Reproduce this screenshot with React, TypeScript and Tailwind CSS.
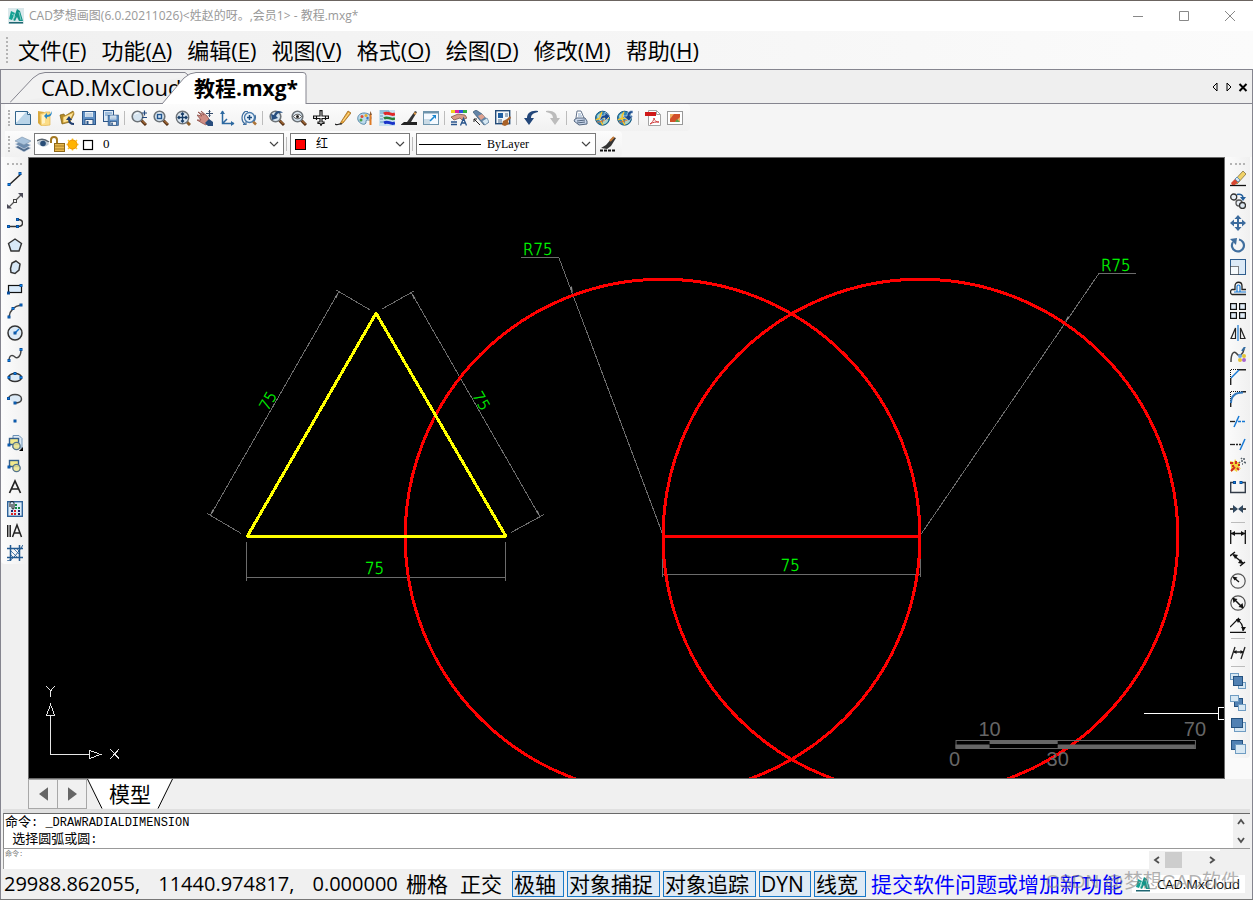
import type { JSX, ReactNode } from "react";

const UI_FONT = "font-['Open_Sans','Noto_Sans_CJK_SC',sans-serif]";

type Tool = { name: string; icon: ReactNode } | "sep";

function Dot({ x, y }: { x: number; y: number }): JSX.Element {
	return (
		<rect
			x={x - 1}
			y={y - 1}
			width="2"
			height="2"
			fill="#0a84e8"
			stroke="#0a4f9c"
			strokeWidth="1"
		/>
	);
}

function Lens({ children }: { children?: ReactNode }): JSX.Element {
	return (
		<>
			<path d="M10.5 10.5 15 15" stroke="#5a3418" strokeWidth="3" />
			<path d="M11 10.5 14.5 14" stroke="#d08a48" strokeWidth="1" />
			<circle cx="6.5" cy="6.5" r="5.3" fill="#d5e4f0" stroke="#6d7378" strokeWidth="1.6" />
			<path d="M3.5 5a4 4 0 0 1 4-2" stroke="#fff" />
			{children}
		</>
	);
}

function Globe({ arrow }: { arrow: string }): JSX.Element {
	return (
		<>
			<circle cx="7.5" cy="8.2" r="7" fill="#2f86b8" stroke="#185a80" />
			<path d="M2 6c2-4 5-3 5-1s-3 2-2 4-3 1-3-3zM8 10c3-2 6-1 5 1s-4 4-5 3z" fill="#a9d4c8" />
			<path d="M1 10c4-4 8 0 13-2M7 2c-3 4-2 9 1 13" stroke="#f6c52c" strokeWidth="1.5" />
			<path d="M2 12c3 0 8-1 11-4" stroke="#e87830" />
			<path d={arrow} fill="#19498c" stroke="#dbe9f5" strokeWidth=".6" />
		</>
	);
}

const floppy = (
	<>
		<rect x="1.5" y="1.5" width="13" height="13" fill="#5e8fc4" stroke="#2c5688" />
		<rect x="4" y="2" width="8" height="5" fill="#e9f2fa" />
		<path d="M4.5 4h7M4.5 6h7" stroke="#9ab6d2" />
		<rect x="4" y="9.5" width="8" height="5" fill="#f4f4f4" stroke="#2c5688" />
		<rect x="5.5" y="11" width="2" height="3" fill="#2c5688" />
	</>
);

const fileTools: Tool[] = [
	{
		name: "新建",
		icon: (
			<>
				<path d="M.5 1.5h12l3 3v10H.5z" fill="#b9d4e8" stroke="#33658c" />
				<path d="M1 2h10L2 12H1z" fill="#f4f9fd" />
				<path d="M12.5 1.5v3h3" fill="#fff" stroke="#33658c" />
			</>
		),
	},
	{
		name: "打开",
		icon: (
			<>
				<path d="M1 1l6 1v13H3L1 13z" fill="#d9a93c" />
				<path d="M3 4l6-2h4v13l-9 1z" fill="#fbdc86" stroke="#e3b552" strokeWidth=".7" />
				<path d="M5 5l3-1v9l-3 1z" fill="#fff2c4" />
				<path d="M15 1c-1 3-3 4-5 4V3L7 6l3 3V7c4 0 5-3 5-6z" fill="#2486c8" />
			</>
		),
	},
	{
		name: "打开云图",
		icon: (
			<>
				<path d="M1 5l4-1 1 2 8-5 1 3-4 8-8 2z" fill="#b38a24" stroke="#7d5d12" strokeWidth=".7" />
				<path d="M4 7l11-5-4 9-7 2z" fill="#ffe59a" stroke="#c0922c" strokeWidth=".7" />
				<path d="M15 14c-4 0-5-2-5-5" stroke="#223f70" strokeWidth="2" />
				<path d="M7 10l3-4 3 4z" fill="#223f70" />
			</>
		),
	},
	{ name: "保存", icon: floppy },
	{
		name: "另存为",
		icon: (
			<>
				<rect x=".5" y=".5" width="10" height="11" fill="#dce9f5" stroke="#2c5688" />
				<path d="M2 3h7M2 5h3" stroke="#5e8fc4" />
				<g transform="translate(4 4) scale(.78)">{floppy}</g>
			</>
		),
	},
	"sep",
	{
		name: "实时缩放",
		icon: (
			<>
				<Lens />
				<path d="M11 3h5M13.5.5v5M11 7.5h5" stroke="#244a80" strokeWidth="1.2" />
			</>
		),
	},
	{
		name: "窗口缩放",
		icon: (
			<Lens>
				<rect x="4.5" y="4.5" width="4" height="4" stroke="#1f5590" strokeWidth="1.4" />
			</Lens>
		),
	},
	{
		name: "范围缩放",
		icon: (
			<>
				<path d="M11 11l4 4" stroke="#8a5b28" strokeWidth="3" />
				<circle cx="7.5" cy="7.5" r="6.2" fill="#dce8f2" stroke="#6d7378" strokeWidth="1.4" />
				<path
					d="M7.5 3v9M3 7.5h9M6 4.5 7.5 3 9 4.5M6 10.5 7.5 12 9 10.5M4.5 6 3 7.500 4.500 9M10.5 6 12 7.500 10.500 9"
					stroke="#163c66"
					strokeWidth="1.3"
				/>
			</>
		),
	},
	{
		name: "平移",
		icon: (
			<>
				<path d="M0 5l5 1-4-4 6 3-3-4 6 5 3 5-4 4-4-2-5-3 4 0z" fill="#cf8d84" stroke="#8e4f49" strokeWidth=".8" />
				<path d="M8 13l4-4 4 3v4h-5z" fill="#294d7d" />
				<path d="M12.5 0v7M9 3.500h7M11.500 1.500l1-1 1 1M11.500 5.500l1 1 1-1" stroke="#364d6c" />
			</>
		),
	},
	{
		name: "坐标系",
		icon: (
			<>
				<path d="M3.5 1v12.5H15M3.500 13.500 8 9" stroke="#2c68a0" strokeWidth="1.5" />
				<path d="M1 4l2.500-3.500L6 4zM12 11l3.500 2.500L12 16z" fill="#2c68a0" />
			</>
		),
	},
	{
		name: "动态缩放",
		icon: (
			<>
				<path d="M12 11.500l3 3" stroke="#ad7438" strokeWidth="2.5" />
				<circle cx="8.500" cy="7.500" r="5" fill="#e8f2fb" stroke="#4a7bac" strokeWidth="1.3" />
				<path d="M8.500 5v5M6 7.500h5" stroke="#1b4c80" strokeWidth="1.5" />
				<path d="M4 1.500C0 5 0 11 4 14M2 14.500h3v-3M4 1.500h3M14 5c1 3 0 5-1 6" stroke="#3f6fa0" strokeWidth="1.2" />
			</>
		),
	},
	"sep",
	{
		name: "上次缩放",
		icon: (
			<Lens>
				<path d="M14 3C12 0 6 0 5 5L2 4l1 6 6-2-2-2c1-3 4-4 7-3z" fill="#274f80" />
			</Lens>
		),
	},
	{
		name: "查看",
		icon: (
			<Lens>
				<path d="M2.500 6.500c2-3 6-3 8 0-2 3-6 3-8 0z" fill="#fff" stroke="#444" />
				<circle cx="6.500" cy="6.500" r="1.500" fill="#222" />
			</Lens>
		),
	},
	{
		name: "移动视图",
		icon: (
			<path
				d="M7 .6h2V6h6.400v2.500H9V12h2v1.500H9L8 15.400l-1-1.900H5V12h2V8.500H.600V6H7zM3.500 6v4M12.500 6v4"
				fill="#fff"
				stroke="#111"
				strokeWidth="1.2"
			/>
		),
	},
	{
		name: "画笔",
		icon: (
			<>
				<path d="M6 12l7-11 3 2-8 10-3 1z" fill="#eca93b" stroke="#9d6820" strokeWidth=".8" />
				<path d="M8 11l6-8" stroke="#ffe39a" />
				<path d="M0 14c3 2 4-1 7 0" stroke="#222" strokeWidth="1.3" />
			</>
		),
	},
	{
		name: "调色板",
		icon: (
			<>
				<path d="M7 3C2 3 0 7 1 10s5 5 7 4 0-4 2-4 4 1 4-2-3-5-7-5z" fill="#bddaec" stroke="#5689aa" />
				<circle cx="5" cy="6.500" r="1.500" fill="#e04b38" />
				<circle cx="9" cy="5.500" r="1.500" fill="#e8ad28" />
				<circle cx="4" cy="10" r="1.500" fill="#48a048" />
				<circle cx="10.500" cy="8" r="1.200" fill="#3b6fbe" />
				<path d="M13.500 15V5" stroke="#df7a24" strokeWidth="2" />
				<path d="M12.500 5l1-4 1.500 4z" fill="#8b5930" />
			</>
		),
	},
	{
		name: "图层颜色",
		icon: (
			<>
				<rect x="0" y="0" width="16" height="16" fill="#c9e2f0" />
				<path d="M1 1h9v2H1M1 6h3M1 9h3M1 12h3" stroke="#5e9ac0" />
				<path d="M5 4c4-3 6 2 11 0" stroke="#e02828" strokeWidth="3" />
				<path d="M5 8.500c4-3 6 2 11 0" stroke="#277c34" strokeWidth="2.5" />
				<path d="M5 13c4-3 6 2 11 0" stroke="#1833c8" strokeWidth="3" />
			</>
		),
	},
	{
		name: "线宽",
		icon: (
			<>
				<path d="M0 14.500 3 12h13v3H0z" fill="#222" />
				<path d="M6 12 14 1l2 1-6 10z" fill="#333" />
				<path d="M13 3l2 1" stroke="#d99648" strokeWidth="2" />
			</>
		),
	},
	{
		name: "全屏",
		icon: (
			<>
				<rect x=".5" y="1.5" width="15" height="13" fill="#f5faff" stroke="#6e94ac" />
				<path d="M.5 2.500h15" stroke="#6e94ac" strokeWidth="2" />
				<rect x="1" y="9" width="6" height="5" fill="#cadbe6" />
				<path d="M7 11l4-4" stroke="#1b87cf" strokeWidth="1.6" />
				<path d="M9 5h4v4z" fill="#1b87cf" />
			</>
		),
	},
	"sep",
	{
		name: "特性",
		icon: (
			<>
				<path d="M0 1.500h4" stroke="#f0d020" strokeWidth="3" />
				<path d="M4 1.500h4" stroke="#e020a0" strokeWidth="3" />
				<path d="M8 1.500h4" stroke="#3050e0" strokeWidth="3" />
				<path d="M12 1.500h4" stroke="#30b040" strokeWidth="3" />
				<path d="M0 7l7-3 7 1 2 3-5 2-2-2-6 2z" fill="#d79b86" stroke="#74483c" strokeWidth=".7" />
				<path d="M0 12h6M0 14.500h6M9.500 15.500l3-7 3 7M10.500 13h4" stroke="#28548c" strokeWidth="1.3" />
			</>
		),
	},
	{
		name: "特性匹配",
		icon: (
			<>
				<path d="M0 2l3-2 6 4 7 8-5 3-6-7z" fill="#6284a7" stroke="#34536f" strokeWidth=".7" />
				<path d="M5 6l4-2 3 3-4 3z" fill="#dea18f" />
				<path d="M9 11l5-3 2 4-4 3z" fill="#d7e9f4" stroke="#6184a4" strokeWidth=".7" />
				<path d="M1 9l6 6M1 12V9h3" stroke="#222" />
			</>
		),
	},
	{
		name: "图块",
		icon: (
			<>
				<rect x=".7" y=".7" width="14" height="13" fill="#f3f7fa" stroke="#234b78" strokeWidth="1.4" />
				<rect x="3" y="3" width="5" height="5" fill="#1f5fa2" />
				<path d="M10 4h3M10 6h3M3 10h4M3 12h4" stroke="#4b6b8b" />
				<path d="M7 15l1-4 4-2 3-3 1 2-3 3 1 3-4 2z" fill="#a96228" />
			</>
		),
	},
	"sep",
	{
		name: "撤销",
		icon: <path d="M15 1C8 0 4 3 4 8H1l5 7 5-7H8c0-3 2-5 7-6z" fill="#23477a" />,
	},
	{
		name: "重做",
		icon: <path d="M1 1c7-1 11 2 11 7h3l-5 7-5-7h3c0-3-2-5-7-6z" fill="#bcbcbc" />,
	},
	"sep",
	{
		name: "打印",
		icon: (
			<>
				<path d="M3 8l1-7h4l3 7" fill="#fff" stroke="#65758d" />
				<path d="M5 4h3M5 6h4" stroke="#8ba6c7" />
				<path d="M2 9l2-1h8l2 3v3l-8 1-5-4z" fill="#c8d5e9" stroke="#52657f" />
				<path d="M4 11l8-1M4 13l8-1" stroke="#52657f" />
			</>
		),
	},
	{ name: "网络打开", icon: <Globe arrow="M5 11c0-4 2-6 5-6V2l5 4-5 5V8C8 8 7 9 5 11z" /> },
	{ name: "网络保存", icon: <Globe arrow="M16 1c-4-1-6 2-6 5H6l6 5 4-5h-3c0-2 1-3 3-3z" /> },
	"sep",
	{
		name: "输出PDF",
		icon: (
			<>
				<path d="M3.5.5h8l4 4v11h-12z" fill="#fff" stroke="#a4a4a4" />
				<path d="M11.5.5v4h4" stroke="#a4a4a4" />
				<rect x="0" y="2" width="11" height="4" fill="#d01818" />
				<path d="M5 14c2-1 4-4 4-6 0 3 3 4 5 4-3 0-6 0-9 2z" stroke="#d04040" />
			</>
		),
	},
	{
		name: "输出图片",
		icon: (
			<>
				<rect x=".5" y="1.5" width="15" height="13" fill="#fff" stroke="#999" />
				<rect x="3" y="4" width="10" height="8" fill="#f0b060" />
				<path d="M3 9l4-5h6v3L8 12H3z" fill="#d24f28" />
				<path d="M8 12l2-3 3 3z" fill="#5aa04c" />
			</>
		),
	},
];

const insertShapes = (
	<>
		<rect x="2.5" y="3.500" width="9" height="6" fill="#f4ea8c" stroke="#35608c" strokeWidth="1.4" />
		<circle cx="9.500" cy="11" r="3.700" fill="#f0e68c" fillOpacity=".85" stroke="#54738c" strokeWidth="1.3" />
		<Dot x={2} y={10} />
	</>
);

const drawTools: Tool[] = [
	{
		name: "直线",
		icon: (
			<>
				<path d="M2 14 14 3" stroke="#222" strokeWidth="1.5" />
				<Dot x={2} y={13.5} />
				<Dot x={13} y={2.5} />
			</>
		),
	},
	{
		name: "构造线",
		icon: (
			<>
				<path d="M2 14 14 2" stroke="#555" strokeWidth="1.2" />
				<path d="M0 11v4.500h5zM16 0v5l-5-5z" fill="#4b4b58" />
				<rect x="6.5" y="6.5" width="3" height="3" fill="#eee" stroke="#444" />
			</>
		),
	},
	{
		name: "多段线",
		icon: (
			<>
				<path d="M2 11.500h9c6 0 6-7 0-7" stroke="#333" strokeWidth="1.4" />
				<Dot x={1.5} y={11.5} />
				<Dot x={10.5} y={11.5} />
				<Dot x={10.5} y={4.5} />
			</>
		),
	},
	{
		name: "正多边形",
		icon: <path d="M8 2l6.500 4.500-2.500 7.500H4L1.500 6.500z" fill="#d7e8f7" stroke="#333" strokeWidth="1.4" />,
	},
	{
		name: "多边形",
		icon: <path d="M9 2l4 3-1 6-4 3.500-4-1-.5-4L5 4z" fill="#d7e8f7" stroke="#333" strokeWidth="1.5" />,
	},
	{
		name: "矩形",
		icon: (
			<>
				<rect x="1.5" y="4.500" width="13" height="7" fill="#d9eafa" stroke="#111" strokeWidth="1.2" />
				<Dot x={1.5} y={12} />
				<Dot x={14} y={4.5} />
			</>
		),
	},
	{
		name: "圆弧",
		icon: (
			<>
				<path d="M2 14C3 7 7 3 14 2" stroke="#444" strokeWidth="1.5" />
				<Dot x={2} y={14} />
				<Dot x={6} y={5.5} />
				<Dot x={14} y={2} />
			</>
		),
	},
	{
		name: "圆",
		icon: (
			<>
				<circle cx="8" cy="8" r="7" fill="#dceaf6" stroke="#333" strokeWidth="1.5" />
				<path d="M8 8l4-4" stroke="#1475ce" strokeWidth="1.5" />
				<Dot x={8} y={8} />
			</>
		),
	},
	{
		name: "样条曲线",
		icon: (
			<>
				<path d="M2 14c0-7 4-6 6-4s6 0 6-7" stroke="#444" strokeWidth="1.4" />
				<Dot x={2} y={13.5} />
				<Dot x={14} y={2.5} />
			</>
		),
	},
	{
		name: "椭圆",
		icon: (
			<>
				<ellipse cx="8" cy="8.500" rx="6.500" ry="4" fill="#dceaf6" stroke="#333" strokeWidth="1.5" />
				<Dot x={2} y={8.5} />
				<Dot x={14} y={8.5} />
				<Dot x={8} y={4.5} />
			</>
		),
	},
	{
		name: "椭圆弧",
		icon: (
			<>
				<path d="M1.500 8c0-6 13-6 13 0 0 3-3 4-7 4" fill="#dceaf6" stroke="#444" strokeWidth="1.5" />
				<Dot x={1.5} y={7.5} />
				<Dot x={8} y={12} />
			</>
		),
	},
	{ name: "点", icon: <Dot x={8} y={8} /> },
	{
		name: "插入块",
		icon: (
			<>
				<path d="M6 .500h6l3 3V13H6z" fill="#dce9f5" stroke="#6c91b4" />
				{insertShapes}
				<path d="M16 12v4h-4z" fill="#000" />
			</>
		),
	},
	{ name: "创建块", icon: insertShapes },
	{
		name: "文字",
		icon: <path d="M2.500 14 8 2l5.500 12M4.500 10h7" stroke="#222" strokeWidth="1.700" />,
	},
	{
		name: "图案填充",
		icon: (
			<>
				<rect x=".7" y=".7" width="14.600" height="14.600" fill="#dcecf9" stroke="#2e639a" strokeWidth="1.4" />
				<path d="M3 6V2.500c0-3 4-3 4 0V7c0 1.500-2 1.500-2 0V3" stroke="#111" />
				<path d="M4 13h2M7 13h2M7 10h2" stroke="#d22" strokeWidth="2" />
				<path d="M8 4h2M8 7h2M11 7h2" stroke="#184" strokeWidth="2" />
				<path d="M11 10h2M11 13h2M4 10h2" stroke="#226" strokeWidth="2" />
			</>
		),
	},
	{
		name: "多行文字",
		icon: <path d="M.700 2v12M3.200 2v12M5.500 14l4.500-12 4.500 12M7 10h6" stroke="#222" strokeWidth="1.5" />,
	},
	{
		name: "填充边界",
		icon: (
			<>
				<path d="M4 6l7 7M7 4l6 6M4 10l3 3M10 4l3 3" stroke="#5180ad" />
				<path d="M0 3.500h16M0 12.500h16M3.500 0v16M12.500 0v16" stroke="#235a91" strokeWidth="1.5" />
				<path d="M0 16c5-1 8-4 16-16" stroke="#235a91" />
			</>
		),
	},
];

const modifyTools: Tool[] = [
	{
		name: "删除",
		icon: (
			<>
				<path d="M0 14.500h16" stroke="#111" strokeWidth="1.3" />
				<path d="M3 11 13 0l3 3L7 13z" fill="#f1d267" stroke="#807040" strokeWidth=".8" />
				<path d="M1 12l4-4 3 3-3 3H2z" fill="#d64732" />
				<path d="M5 8l2-2 3 3-2 2z" fill="#d8e6f2" stroke="#397bb5" strokeWidth=".7" />
			</>
		),
	},
	{
		name: "复制",
		icon: (
			<>
				<circle cx="3.700" cy="4" r="3" fill="#e9eff5" stroke="#333" strokeWidth="1.3" />
				<circle cx="9" cy="10" r="3" fill="#e9eff5" stroke="#555" strokeWidth="1.3" />
				<circle cx="12.500" cy="12.500" r="3" fill="#dce7f1" stroke="#333" strokeWidth="1.3" />
				<path d="M7 1.500c4-1 6 1 6 3.500" stroke="#235e9b" strokeWidth="1.5" />
				<path d="M10 4h6l-3 4z" fill="#235e9b" />
			</>
		),
	},
	{
		name: "移动",
		icon: (
			<path
				d="M8 0l3.500 4H9v3h3V4.500L16 8l-4 3.500V9H9v3h2.500L8 16l-3.500-4H7V9H4v2.500L0 8l4-3.500V7h3V4H4.500z"
				fill="#3c6b9d"
			/>
		),
	},
	{
		name: "旋转",
		icon: (
			<>
				<path d="M9 2.500A6 6 0 1 1 3 5" stroke="#416f9e" strokeWidth="2.2" />
				<path d="M0 2l7-1-1 7z" fill="#416f9e" />
			</>
		),
	},
	{
		name: "缩放",
		icon: (
			<>
				<rect x=".5" y=".5" width="15" height="15" fill="#dceaf7" stroke="#2e5d8e" />
				<rect x=".5" y="7.5" width="8" height="8" fill="#f6fafd" stroke="#111" strokeDasharray="1 1" />
			</>
		),
	},
	{
		name: "偏移",
		icon: (
			<>
				<path d="M16 13.500H2c-2-1-2-4 0-5h3V5c0-5 7-5 7 0v3.500h4" stroke="#222" strokeWidth="1.3" />
				<path d="M16 11H4M7 11V5.500c0-2 3-2 3 0V11" stroke="#1678d4" strokeWidth="1.2" />
			</>
		),
	},
	{
		name: "阵列",
		icon: (
			<g fill="#e0ebf6" stroke="#111" strokeWidth="1.2">
				<rect x=".6" y=".6" width="5.800" height="5.800" />
				<rect x="9.600" y=".6" width="5.800" height="5.800" />
				<rect x=".6" y="9.600" width="5.800" height="5.800" />
				<rect x="9.600" y="9.600" width="5.800" height="5.800" />
			</g>
		),
	},
	{
		name: "镜像",
		icon: (
			<>
				<path d="M5.500 3v10.500H1zM10.500 3v10.500H15z" stroke="#222" strokeWidth="1.2" />
				<path d="M8 0v16" stroke="#1678d4" strokeWidth="1.2" />
			</>
		),
	},
	{
		name: "编辑曲线",
		icon: (
			<>
				<path d="M1 15C1 4 5 4 7 7s6 1 7-5" stroke="#444" strokeWidth="1.5" />
				<path d="M12 4l3-4" stroke="#316aa0" strokeWidth="2" />
				<circle cx="10" cy="9" r="2" fill="#6aa2df" />
				<circle cx="14" cy="9" r="2" fill="#e4c536" />
				<circle cx="10" cy="13" r="2" fill="#e4c536" />
				<circle cx="14" cy="13" r="2" fill="#a965cf" />
			</>
		),
	},
	{
		name: "倒角",
		icon: (
			<>
				<path d="M.5 8V.5H8" stroke="#111" strokeDasharray="1 1" />
				<path d="M.7 16V9M8 .7h8" stroke="#222" strokeWidth="1.4" />
				<path d="M1 9l8-8" stroke="#1678d4" strokeWidth="1.5" />
			</>
		),
	},
	{
		name: "圆角",
		icon: (
			<>
				<path d="M.5 10V.5H10" stroke="#111" strokeDasharray="1 1" />
				<path d="M.7 16v-5M11 .7h5" stroke="#222" strokeWidth="1.4" />
				<path d="M1 12C1 5 5 1.500 13 1.500" stroke="#3379bd" strokeWidth="2" />
			</>
		),
	},
	{
		name: "修剪",
		icon: (
			<>
				<path d="M0 8.500h5" stroke="#222" strokeWidth="1.3" />
				<path d="M8 8.500h8" stroke="#1678d4" strokeDasharray="3 1" strokeWidth="1.3" />
				<path d="M4 14l5-11" stroke="#1678d4" strokeWidth="1.5" />
			</>
		),
	},
	{
		name: "延伸",
		icon: (
			<>
				<path d="M0 9.500h5" stroke="#222" strokeWidth="1.3" />
				<path d="M6 9.500h6" stroke="#222" strokeDasharray="2 1" strokeWidth="1.3" />
				<path d="M10 15l5-11" stroke="#1678d4" strokeWidth="1.5" />
			</>
		),
	},
	{
		name: "分解",
		icon: (
			<>
				<path d="M0 4l4 1 1-3 2 3 3 0-1 4 2 3-3-1-1 4-3-2-3 2 0-5z" fill="#f3d23c" />
				<path d="M1 14l4-4M0 6h3M6 4l0 3M8 8h2M9 13l-2-2M2 9h2" stroke="#d22c20" strokeWidth="2" />
				<path d="M9 6l1-1M11 4h2M11 1l1 1M14 1v2M14 5l2 1M12 7l1 0" stroke="#59636b" strokeWidth="1.6" />
			</>
		),
	},
	{
		name: "打断",
		icon: (
			<>
				<path d="M4 3.500H.7v10h14.600v-10H12" stroke="#333c49" strokeWidth="1.4" />
				<Dot x={4.5} y={3.5} />
				<Dot x={11} y={3.5} />
			</>
		),
	},
	{
		name: "合并",
		icon: (
			<>
				<path d="M0 8h5M11 8h5" stroke="#111" strokeWidth="1.5" />
				<path d="M3 4l5 4-5 4zM13 4 8 8l5 4z" fill="#31485f" />
			</>
		),
	},
	"sep",
	{
		name: "线性标注",
		icon: (
			<>
				<path d="M.7 1v14M15.300 1v14M1 4.500h14" stroke="#111" strokeWidth="1.3" />
				<path d="M1 4.500 5 2v5zM15 4.500 11 2v5z" fill="#111" />
			</>
		),
	},
	{
		name: "对齐标注",
		icon: (
			<>
				<path d="M0 5l5-4M10 15l5-4M3 4l10 8" stroke="#111" strokeWidth="1.4" />
				<path d="M3 3l5 1-3 4zM13 13l-5-1 3-4z" fill="#111" />
			</>
		),
	},
	{
		name: "半径标注",
		icon: (
			<>
				<circle cx="8" cy="8" r="7.200" stroke="#555" strokeWidth="1.2" />
				<path d="M3 4l6 5" stroke="#111" strokeWidth="1.4" />
				<path d="M2.500 3.500l5 1-3 3z" fill="#111" />
			</>
		),
	},
	{
		name: "直径标注",
		icon: (
			<>
				<circle cx="8" cy="8" r="7.200" stroke="#555" strokeWidth="1.2" />
				<path d="M3 3l10 10" stroke="#111" strokeWidth="1.5" />
				<path d="M2.500 3l5 1-4 4zM13.500 13l-5-1 4-4z" fill="#111" />
			</>
		),
	},
	{
		name: "角度标注",
		icon: (
			<>
				<path d="M0 15.300h16M0 10l9-9M7 3c5 2 6 6 6 11" stroke="#111" strokeWidth="1.2" />
				<path d="M6 2h5l-3 4zM11 10h5l-2.500 4z" fill="#111" />
			</>
		),
	},
	"sep",
	{
		name: "编辑标注",
		icon: (
			<>
				<path d="M1 14 5 2M11 14l4-12M4 7h9" stroke="#222" strokeWidth="1.3" />
				<path d="M3.500 7l3-2v4zM13.500 7l-3-2v4z" fill="#111" />
			</>
		),
	},
	"sep",
	{
		name: "前置",
		icon: (
			<>
				<rect x=".5" y=".5" width="8" height="6" fill="#d8e8f3" stroke="#6f9cc2" />
				<rect x="8.500" y="9.500" width="7" height="6" fill="#d8e8f3" stroke="#6f9cc2" />
				<rect x="3.500" y="3.500" width="9" height="9" fill="#5181b3" stroke="#24517f" />
			</>
		),
	},
	{
		name: "后置",
		icon: (
			<>
				<rect x="4.500" y="3.500" width="8" height="8" fill="#5181b3" stroke="#24517f" />
				<rect x=".5" y=".5" width="8" height="6" fill="#d8e8f3" stroke="#6f9cc2" />
				<rect x="8.500" y="9.500" width="7" height="6" fill="#d8e8f3" stroke="#6f9cc2" />
			</>
		),
	},
	{
		name: "置于对象之上",
		icon: (
			<>
				<rect x="4.500" y="5.500" width="11" height="9" fill="#d8e8f3" stroke="#6f9cc2" />
				<rect x="1.500" y="1.500" width="11" height="9" fill="#5181b3" stroke="#24517f" />
			</>
		),
	},
	{
		name: "置于对象之下",
		icon: (
			<>
				<rect x="1.500" y="1.500" width="11" height="9" fill="#5181b3" stroke="#24517f" />
				<rect x="5.500" y="5.500" width="10" height="9" fill="#d8e8f3" stroke="#6f9cc2" />
			</>
		),
	},
];

const menus = [
	["文件", "F"],
	["功能", "A"],
	["编辑", "E"],
	["视图", "V"],
	["格式", "O"],
	["绘图", "D"],
	["修改", "M"],
	["帮助", "H"],
];

const toggles = [
	{ label: "栅格", on: false },
	{ label: "正交", on: false },
	{ label: "极轴", on: true },
	{ label: "对象捕捉", on: true },
	{ label: "对象追踪", on: true },
	{ label: "DYN", on: true },
	{ label: "线宽", on: true },
];

function Logo({ className }: { className: string }): JSX.Element {
	return (
		<svg aria-hidden="true" className={className} viewBox="0 0 16 16" fill="none">
			<path d="M1 14h14v1.500H1z" fill="#1f6672" />
			<path d="M1 11 3 3l4 2-3 7z" fill="#12a394" />
			<path d="M5 12 9 1l3 2 3 10h-4l-2-4-2 4z" fill="#129488" />
			<path d="M4 6l3 2-2 4M11 4l2 8" stroke="#9ce0d6" strokeWidth=".8" />
		</svg>
	);
}

function ToolButtons({
	tools,
	vertical = false,
}: {
	tools: Tool[];
	vertical?: boolean;
}): JSX.Element {
	return (
		<div className={vertical ? "flex flex-col items-center" : "flex items-center"}>
			{tools.map(
				(tool, i): JSX.Element =>
					tool === "sep" ? (
						<span
							key={`sep-${i}`}
							className={
								vertical
									? "mt-[2px] mb-[3px] h-px w-[14px] bg-[#bcbcbc]"
									: "mr-[3px] ml-[2px] h-[14px] w-px bg-[#bcbcbc]"
							}
						/>
					) : (
						<button
							key={tool.name}
							type="button"
							aria-label={tool.name}
							className="flex size-[22px] shrink-0 items-center justify-center"
						>
							<svg aria-hidden="true" className="size-4" viewBox="0 0 16 16" fill="none">
								{tool.icon}
							</svg>
						</button>
					),
			)}
		</div>
	);
}

function Grip({ vertical = false }: { vertical?: boolean }): JSX.Element {
	return vertical ? (
		<span className="mt-[6px] mb-[3px] w-[15px] self-center border-t-2 border-dotted border-[#b4b4b4]" />
	) : (
		<span className="h-4 w-[2px] shrink-0 border-l-2 border-dotted border-[#b4b4b4]" />
	);
}

function Chevron(): JSX.Element {
	return (
		<svg aria-hidden="true" className="mr-1 h-2 w-[10px] shrink-0" viewBox="0 0 10 8" fill="none">
			<path d="M1 2l4 4 4-4" stroke="#444" strokeWidth="1.2" />
		</svg>
	);
}

function TitleBar(): JSX.Element {
	return (
		<header className="flex h-[31px] shrink-0 items-center border-t border-[#6b6460] bg-white pl-2 text-[#999]">
			<Logo className="size-4 bg-[#dbe9ec]" />
			<h1 className="ml-[5px] text-xs leading-4">
				CAD梦想画图(6.0.20211026)&lt;姓赵的呀。,会员1&gt; - 教程.mxg*
			</h1>
			<div className="ml-auto flex">
				{[
					["最小化", "M0 5.5h10"],
					["最大化", "M.5.5h9v9h-9z"],
					["关闭", "M0 0l10 10M10 0 0 10"],
				].map(([name, d]) => (
					<button
						key={name}
						type="button"
						aria-label={name}
						className="flex h-[30px] w-[46px] items-center justify-center"
					>
						<svg aria-hidden="true" className="size-[10px]" viewBox="0 0 10 10" fill="none">
							<path d={d} stroke="#888" />
						</svg>
					</button>
				))}
			</div>
		</header>
	);
}

function MenuBar(): JSX.Element {
	return (
		<nav className="flex h-[38px] shrink-0 items-center bg-linear-to-r from-[#f0f0f0] to-[#fbfbfb] pl-[6px]">
			<span className="h-[26px] w-[2px] border-l-2 border-dotted border-[#b4b4b4]" />
			<div className="ml-[2px] flex text-[22px] leading-7">
				{menus.map(([label, key]) => (
					<button key={key} type="button" className="shrink-0 pr-[7px] pl-2 whitespace-nowrap">
						{label}(<u className="decoration-1 underline-offset-2">{key}</u>)
					</button>
				))}
			</div>
		</nav>
	);
}

function DocumentTabs(): JSX.Element {
	return (
		<div className="flex h-[35px] shrink-0 items-end justify-between border-y border-[#85858f] bg-[#efefef]">
			<div className="flex pl-[9px]">
				<button
					type="button"
					className="relative h-[31px] w-[180px] pl-[31px] text-left text-[22px] leading-[29px] whitespace-nowrap"
				>
					<svg
						aria-hidden="true"
						className="absolute inset-0 size-full"
						viewBox="0 0 180 31"
						preserveAspectRatio="none"
						fill="none"
					>
						<path d="M0 30.500 23 6q6-5.500 12-5.500h140l5 4" fill="#f2f2f2" stroke="#85858f" />
					</svg>
					<span className="relative">CAD.MxCloud</span>
				</button>
				<button
					type="button"
					className="relative -mb-px -ml-7 h-8 w-[145px] pl-[32px] text-left text-[21px] leading-[31px] font-bold whitespace-nowrap"
				>
					<svg
						aria-hidden="true"
						className="absolute inset-0 size-full"
						viewBox="0 0 145 32"
						preserveAspectRatio="none"
						fill="none"
					>
						<path d="M0 32 22 6q6-5.500 12-5.500h107q3 0 3 3V32" fill="#fff" stroke="#85858f" />
					</svg>
					<span className="relative">教程.mxg*</span>
				</button>
			</div>
			<div className="flex h-full items-center pr-[2px]">
				{[
					["上一个", "M7 1v8L3 5z", 1],
					["下一个", "M3 1v8l4-4z", 1],
					["关闭文档", "M1.500 2l7 7M8.500 2l-7 7", 2],
				].map(([name, d, width]) => (
					<button
						key={name}
						type="button"
						aria-label={String(name)}
						className="flex h-5 w-[14px] items-center justify-center"
					>
						<svg aria-hidden="true" className="size-[10px]" viewBox="0 0 10 10" fill="none">
							<path d={String(d)} stroke="#000" strokeWidth={width} />
						</svg>
					</button>
				))}
			</div>
		</div>
	);
}

function PropertyBar(): JSX.Element {
	const box = "flex h-[22px] shrink-0 items-center border border-[#7a7a7a] bg-white";
	return (
		<div className="flex h-[26px] w-fit items-center rounded-r bg-linear-to-b from-[#fcfcfc] to-[#f1f1f1] pr-1 pl-[3px] font-['Liberation_Serif','Noto_Sans_CJK_SC',serif] text-xs">
			<Grip />
			<button type="button" aria-label="图层" className="ml-[2px] flex size-[22px] items-center justify-center">
				<svg aria-hidden="true" className="size-4" viewBox="0 0 16 16" fill="none">
					<path d="M0 11l7-3 9 4-7 4z" fill="#4f6b8c" stroke="#e5edf5" strokeWidth=".6" />
					<path d="M0 8l7-3 9 4-7 4z" fill="#6d8cae" stroke="#e5edf5" strokeWidth=".6" />
					<path d="M0 5l7-4 9 4-7 4z" fill="#a9c3dc" stroke="#7890a8" strokeWidth=".6" />
				</svg>
			</button>
			<div className={`${box} w-[250px] pl-[2px]`}>
				<svg aria-hidden="true" className="h-4 w-[60px] shrink-0" viewBox="0 0 60 16" fill="none">
					<path d="M0 7c4-4 9-4 12 1-4 4-9 3-12-1z" fill="#bdc9d4" />
					<path d="M0 5c4-3 8-2 12 1" stroke="#59646e" strokeWidth="1.5" />
					<circle cx="6" cy="7.500" r="2.800" fill="#294e78" />
					<path d="M14 7V4c0-4 6-4 6 0v3" stroke="#a47922" strokeWidth="2" />
					<rect x="17.500" y="7.500" width="10" height="8" fill="#e8b84c" stroke="#8e6818" />
					<path d="M18 10h9M18 13h9" stroke="#a47922" />
					<path d="M35.500 2.500v12M29.500 8.500h12M31 4l9 9M40 4l-9 9" stroke="#f8c820" strokeWidth="1.5" />
					<circle cx="35.500" cy="8.500" r="4.500" fill="#ffb400" stroke="#f09000" />
					<rect x="46.500" y="4.500" width="9" height="9" fill="#fff" stroke="#000" strokeWidth="1.2" />
				</svg>
				<select aria-label="当前图层" className="min-w-0 flex-1 appearance-none pl-[6px] text-[13px]">
					<option>0</option>
				</select>
				<Chevron />
			</div>
			<span className="mr-[3px] ml-[2px] h-[14px] w-px bg-[#bcbcbc]" />
			<div className={`${box} w-[120px] pl-1`}>
				<span className="size-[11px] shrink-0 border border-black bg-[#f00]" />
				<select
					aria-label="颜色"
					className="h-5 min-w-0 flex-1 appearance-none pl-[10px] text-xs leading-5"
				>
					<option>红</option>
				</select>
				<Chevron />
			</div>
			<span className="mr-[3px] ml-[2px] h-[14px] w-px bg-[#bcbcbc]" />
			<div className={`${box} w-[180px] pl-[2px]`}>
				<span className="h-px w-[62px] shrink-0 bg-black" />
				<select aria-label="线型" className="min-w-0 flex-1 appearance-none pl-[6px] text-xs">
					<option>ByLayer</option>
				</select>
				<Chevron />
			</div>
			<button type="button" aria-label="线型管理" className="ml-[2px] flex h-[22px] w-5 items-center justify-center">
				<svg aria-hidden="true" className="size-4" viewBox="0 0 16 16" fill="none">
					<path d="M1 12l5-3 7-8 3 1-5 8-4 3z" fill="#333" />
					<path d="M10 5l4-4" stroke="#c47a38" strokeWidth="2" />
					<path d="M0 14.500h16" stroke="#111" strokeWidth="2" strokeDasharray="3 1" />
				</svg>
			</button>
		</div>
	);
}

function Drawing(): JSX.Element {
	return (
		<svg
			role="img"
			aria-label="绘图区"
			className="absolute inset-0 size-full"
			viewBox="29 158 1195 619"
			preserveAspectRatio="xMidYMid slice"
			fill="none"
		>
			<g stroke="#6c6c6c" strokeWidth="1" shapeRendering="crispEdges">
				<path d="M247.500 541v39M505.500 541v39M247.500 576.500h258" />
				<path d="M211 515 339 292M208 513l34 20M337 290l34 20" />
				<path d="M412 293l128 223M382 309l32-18M511 532l33-18" />
				<path d="M662.500 541v35M920.500 541v35M662.500 573.500h258" />
				<path d="M521 257.500h38L662 532M1135 273.500h-37L921 533" />
			</g>
			<path
				d="M211 515l2-6 2 1zM339 292l-2 6-2-1zM412 293l2 6 2-1zM540 516l-2-6-2 1zM573 293l-3-6 2-1zM1064 322l3-6 2 1z"
				fill="#888"
			/>
			<g stroke="#f00" strokeWidth="3" shapeRendering="crispEdges">
				<circle cx="662.500" cy="536" r="257" />
				<circle cx="920" cy="536" r="257" />
				<path d="M662 535.500h258" />
			</g>
			<path
				d="M376.500 313 248 535.500h258z"
				stroke="#ff0"
				strokeWidth="3"
				strokeLinejoin="round"
				shapeRendering="crispEdges"
			/>
			<g
				className="font-['DejaVu_Sans',sans-serif] text-[15px] font-extralight"
				fill="#0f0"
				stroke="#0f0"
				strokeWidth=".3"
				textAnchor="middle"
			>
				<text x="375" y="573">75</text>
				<text x="790" y="570">75</text>
				<text x="538" y="255">R75</text>
				<text x="1115" y="271">R75</text>
				<text transform="translate(273 403) rotate(-60)">75</text>
				<text transform="translate(477 403) rotate(60)">75</text>
			</g>
			<g stroke="#e6e6e6" shapeRendering="crispEdges">
				<path d="M51.500 714v39.500H90M47.500 714.500l4-11 4 11zM90.500 749.500l11 4-11 4z" />
				<path d="M47 685l4.500 5 4.500-5M51.500 690v6M111 748l9 10M120 748l-9 10" />
			</g>
			<g stroke="#666">
				<path d="M955.500 739.500h239v8h-239z" />
				<path d="M955 745.500h34M1057 745.500h137M989 741h68" strokeWidth="4" />
			</g>
			<g
				className="font-['Liberation_Sans',sans-serif] text-[20px]"
				fill="#666"
				textAnchor="middle"
			>
				<text x="989" y="735">10</text>
				<text x="1194" y="735">70</text>
				<text x="954" y="765">0</text>
				<text x="1057" y="765">30</text>
			</g>
			<path
				d="M1143 712.500h74M1224 706.500h-6.500v12h6.500M1223.500 632v74M1223.500 719v58"
				stroke="#fff"
				shapeRendering="crispEdges"
			/>
		</svg>
	);
}

function ModelTabs(): JSX.Element {
	return (
		<div className="flex h-[30px] shrink-0 items-start pl-[27px]">
			{[
				["上一布局", "M8 0v12L0 6z"],
				["下一布局", "M0 0v12l8-6z"],
			].map(([name, d]) => (
				<button
					key={name}
					type="button"
					aria-label={name}
					className="flex h-[30px] w-[30px] items-center justify-center border border-[#a8a8a8] not-first:-ml-px"
				>
					<svg aria-hidden="true" className="h-4 w-[9px]" viewBox="0 -1 8 14">
						<path d={d} fill="#666" />
					</svg>
				</button>
			))}
			<button type="button" className="relative h-[30px] w-[86px] text-[21px] leading-[30px]">
				<svg
					aria-hidden="true"
					className="absolute inset-0 size-full"
					viewBox="0 0 86 30"
					preserveAspectRatio="none"
				>
					<path d="M0 0l15 29.500h56L86 0z" fill="#fff" />
					<path d="M.500 0l14.500 29.500M71 29.500 85.500 0" stroke="#000" />
				</svg>
				<span className="relative">模型</span>
			</button>
		</div>
	);
}

function ScrollArrow({ name, d }: { name: string; d: string }): JSX.Element {
	return (
		<button type="button" aria-label={name} className="flex size-4 items-center justify-center">
			<svg aria-hidden="true" className="size-2" viewBox="0 0 8 8" fill="none">
				<path d={d} stroke="#505050" strokeWidth="1.8" />
			</svg>
		</button>
	);
}

function CommandPanel(): JSX.Element {
	return (
		<section
			aria-label="命令行"
			className="mx-[2px] shrink-0 border-t-4 border-[#e0e0e0] font-['Liberation_Mono','Noto_Sans_CJK_SC',monospace]"
		>
			<div className="flex h-[35px] border-t border-l border-t-[#696969] border-l-[#888] bg-white">
				<div className="flex-1 pl-px text-[13px] leading-[17px] whitespace-pre">
					<p>
						命令<span className="text-xs">: _DRAWRADIALDIMENSION</span>
					</p>
					<p>
						<span className="text-xs"> </span>选择圆弧或圆<span className="text-xs">:</span>
					</p>
				</div>
				<div className="flex w-[17px] flex-col justify-between bg-[#f0f0f0]">
					<ScrollArrow name="向上" d="M1 6l3-4 3 4" />
					<ScrollArrow name="向下" d="M1 2l3 4 3-4" />
				</div>
			</div>
			<div className="flex h-[21px] items-start border-t border-l border-[#999] bg-white pl-px">
				<label htmlFor="command" className="text-[7px] leading-[10px] text-[#777]">
					命令:
				</label>
				<input id="command" type="text" className="h-5 min-w-0 flex-1 outline-none" />
				<div className="mt-[2px] flex h-[18px] w-[71px] items-center justify-between bg-[#f0f0f0]">
					<ScrollArrow name="向左" d="M6 1 2 4l4 3" />
					<span className="mr-auto h-4 w-[17px] bg-[#cdcdcd]" />
					<ScrollArrow name="向右" d="M2 1l4 3-4 3" />
				</div>
				<span className="h-5 w-[30px] bg-[#f0f0f0]" />
			</div>
		</section>
	);
}

function StatusBar(): JSX.Element {
	return (
		<footer className="relative flex h-[30px] shrink-0 items-center bg-[#f0f0f0] pl-[3px] text-[21px] leading-[26px] whitespace-nowrap">
			<output className="flex w-[400px] shrink-0 gap-[18px] text-[20px]">
				<span>29988.862055,</span>
				<span>11440.974817,</span>
				<span>0.000000</span>
			</output>
			<div className="flex shrink-0 gap-[3px]">
				{toggles.map(({ label, on }) => (
					<button
						key={label}
						type="button"
						aria-pressed={on}
						className={
							on
								? "h-[26px] min-w-[52px] border border-[#1878c8] bg-[#deeaf5] pr-[6px] pl-px text-left leading-6"
								: "h-[26px] w-[51px] pl-[2px] text-left leading-6"
						}
					>
						{label}
					</button>
				))}
			</div>
			<a href="#feedback" className="ml-[5px] shrink-0 text-[#00f]">
				提交软件问题或增加新功能
			</a>
			<div className="ml-[9px] flex h-[18px] items-center bg-white pr-[5px] pl-[3px]">
				<Logo className="size-4" />
				<span className="ml-[6px] text-[13px] leading-4">CAD.MxCloud</span>
			</div>
			<span className="absolute top-0 right-3 font-['Liberation_Sans','Noto_Sans_CJK_SC',sans-serif] text-[19px] text-[#808080]/60">
				CSDN @梦想CAD软件
			</span>
		</footer>
	);
}

export default function App(): JSX.Element {
	return (
		<div className={`flex h-screen min-h-[700px] flex-col overflow-hidden bg-[#f0f0f0] text-black ${UI_FONT}`}>
			<TitleBar />
			<MenuBar />
			<div className="flex min-h-0 flex-1 flex-col border-x border-[#85858f]">
				<DocumentTabs />
				<div className="shrink-0 bg-[#f5f5f5] pl-1">
					<div className="flex h-[27px] w-fit items-center rounded-r bg-linear-to-b from-[#fcfcfc] to-[#f1f1f1] pr-1 pl-[3px]">
						<Grip />
						<span className="w-[2px]" />
						<ToolButtons tools={fileTools} />
					</div>
					<PropertyBar />
				</div>
				<main className="flex min-h-0 flex-1">
					<aside className="flex w-[27px] shrink-0 flex-col">
						<div className="flex flex-col rounded-b bg-linear-to-r from-[#fcfcfc] to-[#f0f0f0]">
							<Grip vertical />
							<ToolButtons tools={drawTools} vertical />
						</div>
					</aside>
					<div className="relative min-w-0 flex-1 border border-[#6a6a6a] bg-black">
						<Drawing />
					</div>
					<aside className="flex w-[27px] shrink-0 flex-col bg-[#fafafa] pr-[2px]">
						<div className="flex flex-col rounded-b bg-linear-to-r from-[#fcfcfc] to-[#f0f0f0]">
							<Grip vertical />
							<ToolButtons tools={modifyTools} vertical />
						</div>
					</aside>
				</main>
				<ModelTabs />
				<CommandPanel />
				<StatusBar />
			</div>
			<div className="h-px shrink-0 bg-[#777]" />
		</div>
	);
}
